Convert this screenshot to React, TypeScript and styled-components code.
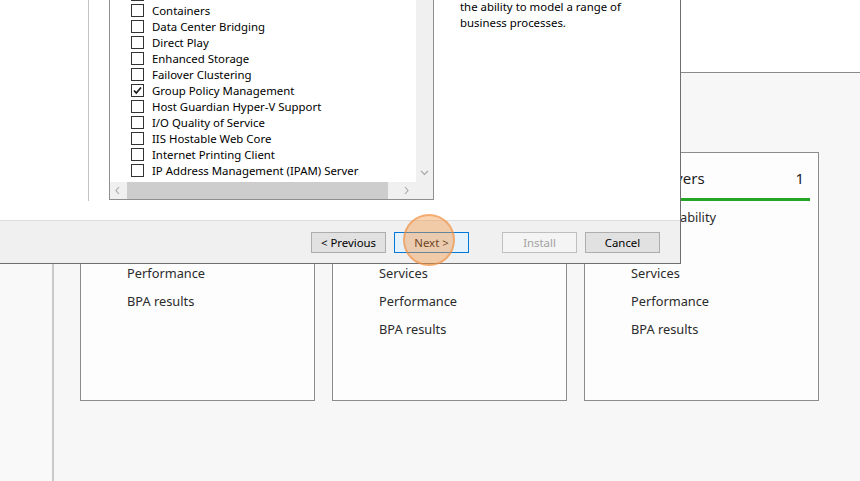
import React from 'react';
import styled, { createGlobalStyle } from 'styled-components';

const GlobalStyle = createGlobalStyle`
  *, *::before, *::after {
    box-sizing: border-box;
  }
  html, body {
    margin: 0;
    padding: 0;
  }
  body {
    width: 860px;
    height: 481px;
    overflow: hidden;
    font-family: "Noto Sans", "Open Sans", sans-serif;
    color: #000;
  }
`;

// Server Manager behind the wizard
const Screen = styled.div`
  position: relative;
  width: 860px;
  height: 481px;
  display: flex;
  background: #f7f7f7;
  overflow: hidden;
`;

const SideNav = styled.div`
  width: 54px;
  flex-shrink: 0;
  background: #f9f9f9;
  border-right: 2px solid #cacaca;
`;

const Main = styled.div`
  flex: 1;
  display: flex;
  flex-direction: column;
`;

const Banner = styled.div`
  height: 73px;
  background: #ffffff;
  border-bottom: 1px solid #8a8a8a;
`;

const TileRow = styled.div`
  display: flex;
  gap: 17px;
  padding: 79px 0 0 26px;
`;

const Tile = styled.div`
  width: 235px;
  height: 249px;
  background: #fdfdfd;
  border: 1px solid #8c8c8c;
  padding: 0 8px;
`;

const TileHeader = styled.div`
  height: 48px;
  padding: 5px 6px 0 14px;
  display: flex;
  align-items: center;
  gap: 8px;
  border-bottom: 3px solid #25a525;
  font-size: 15px;
  color: #1e1e1e;
`;

const TileTitle = styled.span`
  flex: 1;
  white-space: nowrap;
`;

const TileItems = styled.ul`
  list-style: none;
  margin: 0;
  padding: 2px 0 0 38px;
`;

const TileItem = styled.li`
  height: 28px;
  line-height: 28px;
  font-size: 12.8px;
  color: #2b2b2b;
`;

// Wizard window
const Dialog = styled.div`
  position: absolute;
  left: 0;
  top: 0;
  width: 681px;
  height: 264px;
  display: flex;
  flex-direction: column;
  background: #f0f0f0;
  border-right: 1px solid #6f6f6f;
  border-bottom: 1px solid #6f6f6f;
`;

const Body = styled.div`
  height: 221px;
  display: flex;
  align-items: flex-start;
  background: #ffffff;
  border-bottom: 1px solid #dcdcdc;
`;

const WizardNav = styled.div`
  width: 89px;
  height: 201px;
  border-right: 1px solid #c4c4c4;
`;

const ListArea = styled.div`
  padding-left: 20px;
`;

const ListBox = styled.div`
  width: 325px;
  height: 200px;
  display: grid;
  grid-template-columns: minmax(0, 1fr) 17px;
  grid-template-rows: minmax(0, 1fr) 17px;
  border: 1px solid #8f8f8f;
  border-top: none;
  background: #ffffff;
`;

const Viewport = styled.div`
  min-height: 0;
  overflow: hidden;
  padding-left: 21px;
`;

const Features = styled.ul`
  list-style: none;
  margin: -14px 0 0 0;
  padding: 0;
  font-size: 11.4px;
`;

const Feature = styled.li`
  height: 16px;
  display: flex;
  align-items: center;
  gap: 8px;
  white-space: nowrap;
  color: #000;
`;

const Check = styled.span`
  width: 13px;
  height: 13px;
  flex-shrink: 0;
  border: 1px solid #333333;
  background: #ffffff;
  display: flex;
  align-items: center;
  justify-content: center;
`;

const VScroll = styled.div`
  background: #f0f0f0;
  display: flex;
  flex-direction: column;
  justify-content: flex-end;
`;

const HScroll = styled.div`
  background: #f0f0f0;
  display: flex;
  align-items: center;
  min-width: 0;
`;

const ArrowButton = styled.div`
  width: 17px;
  height: 17px;
  flex-shrink: 0;
  display: flex;
  align-items: center;
  justify-content: center;
`;

const Thumb = styled.div`
  height: 17px;
  width: 261px;
  flex-shrink: 0;
  background: #cdcdcd;
`;

const Track = styled.div`
  flex: 1;
`;

const Corner = styled.div`
  background: #f0f0f0;
`;

const Description = styled.div`
  padding-left: 26px;
  margin-top: -1px;
  font-size: 11.4px;
  line-height: 16px;
  color: #000;
`;

const Footer = styled.div`
  flex: 1;
  display: flex;
  justify-content: flex-end;
  align-items: flex-start;
  padding: 11px 20px 0 0;
`;

type ButtonKind = 'normal' | 'default' | 'disabled';

const WizardButton = styled.div<{ $kind?: ButtonKind; $gap?: number }>`
  width: 75px;
  height: 21px;
  margin-left: ${p => p.$gap ?? 8}px;
  display: flex;
  align-items: center;
  justify-content: center;
  font-size: 11.4px;
  border: 1px solid
    ${p => (p.$kind === 'default' ? '#0078d7' : p.$kind === 'disabled' ? '#bfbfbf' : '#adadad')};
  background: ${p => (p.$kind === 'default' ? '#e5f1fb' : p.$kind === 'disabled' ? '#f4f4f4' : '#e1e1e1')};
  color: ${p => (p.$kind === 'disabled' ? '#a3a3a3' : '#000')};
`;

const ClickMarker = styled.div`
  position: absolute;
  left: 403px;
  top: 214px;
  width: 52px;
  height: 52px;
  border-radius: 50%;
  background: rgba(244, 150, 70, 0.42);
  border: 2px solid rgba(238, 140, 60, 0.55);
  pointer-events: none;
`;

const Chevron: React.FC<{ dir: 'left' | 'right' | 'down' }> = ({ dir }) => {
  const d = {
    left: 'M5 1 L2 4.5 L5 8',
    right: 'M2 1 L5 4.5 L2 8',
    down: 'M1 2 L4.5 5.5 L8 2',
  }[dir];
  return (
    <svg width="9" height="9" viewBox="0 0 9 9">
      <path d={d} fill="none" stroke="#a6a6a6" strokeWidth="1.1" />
    </svg>
  );
};

const features = [
  { name: 'BranchCache' },
  { name: 'Containers' },
  { name: 'Data Center Bridging' },
  { name: 'Direct Play' },
  { name: 'Enhanced Storage' },
  { name: 'Failover Clustering' },
  { name: 'Group Policy Management', checked: true },
  { name: 'Host Guardian Hyper-V Support' },
  { name: 'I/O Quality of Service' },
  { name: 'IIS Hostable Web Core' },
  { name: 'Internet Printing Client' },
  { name: 'IP Address Management (IPAM) Server' },
];

const tiles = [
  { title: 'File and Storage Services', items: ['Manageability', 'Events', 'Performance', 'BPA results'] },
  { title: 'Local Server', items: ['Manageability', 'Events', 'Services', 'Performance', 'BPA results'] },
  { title: 'All Servers', items: ['Manageability', 'Events', 'Services', 'Performance', 'BPA results'] },
];

const ServerIcon = () => (
  <svg width="16" height="16" viewBox="0 0 16 16">
    <rect x="3" y="1" width="10" height="14" fill="#d6d6d6" stroke="#7a7a7a" />
    <line x1="5" y1="4" x2="11" y2="4" stroke="#7a7a7a" />
    <line x1="5" y1="7" x2="11" y2="7" stroke="#7a7a7a" />
  </svg>
);

const App: React.FC = () => (
  <>
    <GlobalStyle />
    <Screen>
      <SideNav />
      <Main>
        <Banner />
        <TileRow>
          {tiles.map(t => (
            <Tile key={t.title}>
              <TileHeader>
                <ServerIcon />
                <TileTitle>{t.title}</TileTitle>
                <span>1</span>
              </TileHeader>
              <TileItems>
                {t.items.map(i => (
                  <TileItem key={i}>{i}</TileItem>
                ))}
              </TileItems>
            </Tile>
          ))}
        </TileRow>
      </Main>

      <Dialog>
        <Body>
          <WizardNav />
          <ListArea>
            <ListBox>
              <Viewport>
                <Features>
                  {features.map(f => (
                    <Feature key={f.name}>
                      <Check>
                        {f.checked && (
                          <svg width="11" height="11" viewBox="0 0 11 11">
                            <path d="M2 5.5 L4.3 8 L9 2.5" fill="none" stroke="#1a1a1a" strokeWidth="1.7" />
                          </svg>
                        )}
                      </Check>
                      {f.name}
                    </Feature>
                  ))}
                </Features>
              </Viewport>
              <VScroll>
                <ArrowButton>
                  <Chevron dir="down" />
                </ArrowButton>
              </VScroll>
              <HScroll>
                <ArrowButton>
                  <Chevron dir="left" />
                </ArrowButton>
                <Thumb />
                <Track />
                <ArrowButton>
                  <Chevron dir="right" />
                </ArrowButton>
              </HScroll>
              <Corner />
            </ListBox>
          </ListArea>
          <Description>
            the ability to model a range of
            <br />
            business processes.
          </Description>
        </Body>
        <Footer>
          <WizardButton $gap={0}>&lt; Previous</WizardButton>
          <WizardButton $kind="default">Next &gt;</WizardButton>
          <WizardButton $kind="disabled" $gap={33}>Install</WizardButton>
          <WizardButton>Cancel</WizardButton>
        </Footer>
      </Dialog>
      <ClickMarker />
    </Screen>
  </>
);

export default App;
